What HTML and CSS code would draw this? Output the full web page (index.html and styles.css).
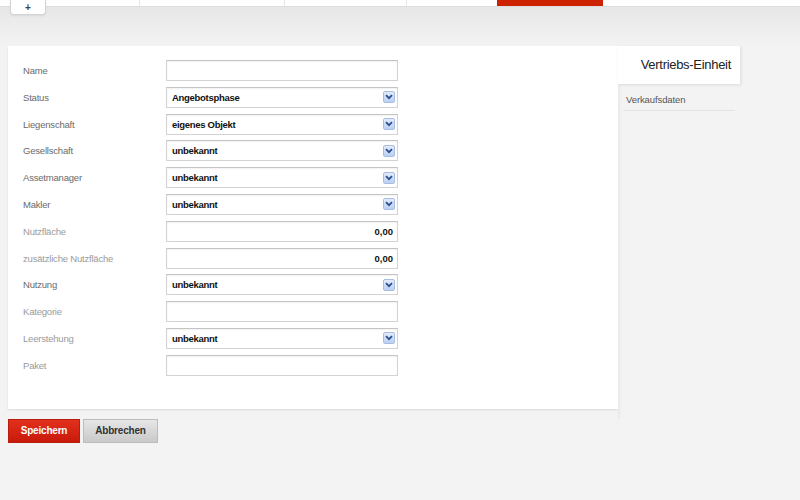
FILE: index.html
```html
<!DOCTYPE html>
<html lang="de">
<head>
<meta charset="utf-8">
<title>Vertriebs-Einheit</title>
<link rel="stylesheet" href="styles.css">
</head>
<body>
<div class="topbar">
  <div class="addtab">+</div>
  <div class="navitem w1"></div>
  <div class="navitem w2"></div>
  <div class="navitem w3"></div>
  <div class="navitem w4"></div>
  <div class="navitem active"></div>
</div>
<div class="page">
  <div class="content">
    <div class="main">
      <div class="panel">
        <div class="form">
          <label class="lbl">Name</label>
          <div class="field"></div>

          <label class="lbl">Status</label>
          <div class="field select"><span>Angebotsphase</span><span class="arrow"><svg width="8" height="6" viewBox="0 0 8 6"><path d="M1 1.2 L4 4.2 L7 1.2" fill="none" stroke="#2b4f93" stroke-width="1.8"/></svg></span></div>

          <label class="lbl">Liegenschaft</label>
          <div class="field select"><span>eigenes Objekt</span><span class="arrow"><svg width="8" height="6" viewBox="0 0 8 6"><path d="M1 1.2 L4 4.2 L7 1.2" fill="none" stroke="#2b4f93" stroke-width="1.8"/></svg></span></div>

          <label class="lbl">Gesellschaft</label>
          <div class="field select"><span>unbekannt</span><span class="arrow"><svg width="8" height="6" viewBox="0 0 8 6"><path d="M1 1.2 L4 4.2 L7 1.2" fill="none" stroke="#2b4f93" stroke-width="1.8"/></svg></span></div>

          <label class="lbl">Assetmanager</label>
          <div class="field select"><span>unbekannt</span><span class="arrow"><svg width="8" height="6" viewBox="0 0 8 6"><path d="M1 1.2 L4 4.2 L7 1.2" fill="none" stroke="#2b4f93" stroke-width="1.8"/></svg></span></div>

          <label class="lbl">Makler</label>
          <div class="field select"><span>unbekannt</span><span class="arrow"><svg width="8" height="6" viewBox="0 0 8 6"><path d="M1 1.2 L4 4.2 L7 1.2" fill="none" stroke="#2b4f93" stroke-width="1.8"/></svg></span></div>

          <label class="lbl light">Nutzfläche</label>
          <div class="field num">0,00</div>

          <label class="lbl light">zusätzliche Nutzfläche</label>
          <div class="field num">0,00</div>

          <label class="lbl">Nutzung</label>
          <div class="field select"><span>unbekannt</span><span class="arrow"><svg width="8" height="6" viewBox="0 0 8 6"><path d="M1 1.2 L4 4.2 L7 1.2" fill="none" stroke="#2b4f93" stroke-width="1.8"/></svg></span></div>

          <label class="lbl light">Kategorie</label>
          <div class="field"></div>

          <label class="lbl light">Leerstehung</label>
          <div class="field select"><span>unbekannt</span><span class="arrow"><svg width="8" height="6" viewBox="0 0 8 6"><path d="M1 1.2 L4 4.2 L7 1.2" fill="none" stroke="#2b4f93" stroke-width="1.8"/></svg></span></div>

          <label class="lbl light">Paket</label>
          <div class="field"></div>
        </div>
      </div>
      <div class="actions">
        <button class="btn save">Speichern</button>
        <button class="btn cancel">Abbrechen</button>
      </div>
    </div>
    <div class="side">
      <div class="sidetab">Vertriebs-Einheit</div>
      <div class="sidebody">
        <div class="sidelink">Verkaufsdaten</div>
      </div>
    </div>
  </div>
</div>
</body>
</html>
```
FILE: styles.css
```css
html, body {
  margin: 0;
  padding: 0;
}
body {
  background: #f3f3f3;
  font-family: "Liberation Sans", Arial, sans-serif;
  font-size: 11px;
  color: #333;
  width: 800px;
  height: 500px;
  overflow: hidden;
}
.topbar {
  height: 6px;
  background: #fff;
  border-bottom: 1px solid #dcdcdc;
  display: flex;
  position: relative;
}
.addtab {
  position: absolute;
  left: 10px;
  top: 0;
  width: 34px;
  height: 14px;
  background: #fff;
  border: 1px solid #d4d4d4;
  border-top: none;
  border-radius: 0 0 4px 4px;
  box-shadow: 0 1px 2px rgba(0,0,0,0.08);
  text-align: center;
  font-size: 10px;
  line-height: 15px;
  color: #444;
  font-weight: bold;
  z-index: 2;
}
.navitem {
  height: 6px;
  border-right: 1px solid #e6e6e6;
}
.w1 { width: 139px; }
.w2 { width: 144px; }
.w3 { width: 121px; }
.w4 { width: 90px; border-right: none; }
.navitem.active {
  width: 106px;
  background: #cc2200;
  border-right: none;
}
.page {
  background: linear-gradient(#e7e7e7 0px, #f3f3f3 40px);
  padding: 39px 0 0 8px;
}
.content {
  display: flex;
  align-items: flex-start;
}
.main {
  width: 610px;
}
.panel {
  background: #fff;
  box-shadow: 0 1px 2px rgba(0,0,0,0.1);
  padding: 14px 0 33px 15px;
}
.form {
  display: grid;
  grid-template-columns: 143px 232px;
  grid-auto-rows: 21px;
  row-gap: 5.8px;
  align-items: center;
}
.lbl {
  color: #6a6a6a;
  font-size: 9.5px;
  letter-spacing: -0.2px;
}
.lbl.light {
  color: #9a9a9a;
}
.field {
  height: 21px;
  box-sizing: border-box;
  border: 1px solid #d3d3d3;
  border-top-color: #c4c4c4;
  background: #fff;
  box-shadow: inset 0 1px 2px rgba(0,0,0,0.06);
  display: flex;
  align-items: center;
  padding: 0 5px;
  font-weight: bold;
  color: #111;
  font-size: 9.5px;
  letter-spacing: -0.3px;
}
.field.select {
  justify-content: space-between;
  padding-right: 2px;
}
.field.num {
  justify-content: flex-end;
  padding-right: 4px;
  letter-spacing: 0;
}
.arrow {
  width: 12px;
  height: 12px;
  box-sizing: border-box;
  border: 1px solid #a7bde2;
  border-radius: 2px;
  background: linear-gradient(#e3ebf9, #bcd0f1);
  display: flex;
  align-items: center;
  justify-content: center;
}
.actions {
  display: flex;
  gap: 3px;
  margin-top: 10px;
}
.btn {
  height: 24px;
  font-family: "Liberation Sans", Arial, sans-serif;
  font-size: 10px;
  font-weight: bold;
  letter-spacing: -0.2px;
  padding: 0;
  cursor: pointer;
}
.save {
  width: 72px;
  color: #fff;
  border: 1px solid #b81c0c;
  background: linear-gradient(#e2301c, #c81a0a);
}
.cancel {
  width: 75px;
  color: #333;
  border: 1px solid #bcbcbc;
  background: linear-gradient(#e6e6e6, #c9c9c9);
}
.side {
  width: 122px;
  display: flex;
  flex-direction: column;
}
.sidetab {
  height: 38px;
  background: #fff;
  box-shadow: 1px 1px 3px rgba(0,0,0,0.1);
  font-size: 13px;
  letter-spacing: -0.3px;
  color: #222;
  text-align: right;
  padding-right: 9px;
  line-height: 37px;
  position: relative;
  z-index: 1;
}
.sidebody {
  height: 330px;
  padding: 5px 5px 0 5px;
  background: linear-gradient(90deg, #e9e9e9 0px, #f3f3f3 4px);
}
.sidelink {
  color: #555;
  font-size: 9.5px;
  letter-spacing: -0.1px;
  padding: 5px 3px 5px;
  border-bottom: 1px solid #e4e4e4;
}
```
